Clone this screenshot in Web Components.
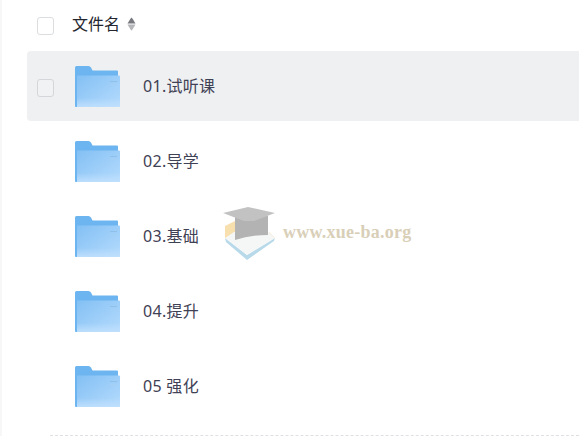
<!DOCTYPE html>
<html lang="zh">
<head>
<meta charset="utf-8">
<title>文件列表</title>
<style>
    html, body { margin: 0; padding: 0; background: #fff; overflow: hidden; }
    body { width: 579px; height: 436px; }
</style>
</head>
<body>
<file-list>
    <file-row name="01.试听课" active></file-row>
    <file-row name="02.导学"></file-row>
    <file-row name="03.基础"></file-row>
    <file-row name="04.提升"></file-row>
    <file-row name="05 强化"></file-row>
    <site-watermark slot="overlay"></site-watermark>
</file-list>

<script>
const FONT = '"Noto Sans", "Noto Sans CJK SC", sans-serif';

class CheckBox extends HTMLElement {
    connectedCallback() {
        this.attachShadow({ mode: 'open' });
        this.shadowRoot.innerHTML = `
            <style>
                :host {
                    display: block;
                    box-sizing: border-box;
                    width: 17px;
                    height: 18px;
                    background: #fff;
                    border: 1px solid #dcdde0;
                    border-radius: 3px;
                }
                :host([muted]) { background: #f1f2f4; border-color: #d5d6d9; }
            </style>
        `;
    }
}

class FolderIcon extends HTMLElement {
    connectedCallback() {
        this.attachShadow({ mode: 'open' });
        this.shadowRoot.innerHTML = `
            <style>
                :host { display: block; width: 46px; height: 42px; }
                svg { display: block; }
            </style>
            <svg width="46" height="42" viewBox="0 0 46 42">
                <defs>
                    <linearGradient id="front" x1="0" y1="0" x2="1" y2="1">
                        <stop offset="0" stop-color="#83c0f4"/>
                        <stop offset="1" stop-color="#b5dbfd"/>
                    </linearGradient>
                    <linearGradient id="band" x1="0" y1="0" x2="0" y2="1">
                        <stop offset="0" stop-color="#c0e0fd" stop-opacity="0"/>
                        <stop offset="1" stop-color="#c0e0fd" stop-opacity=".9"/>
                    </linearGradient>
                </defs>
                <path d="M0 1.500Q0 0 1.500 0H13.500Q15 0 16 1.500L17.500 4.500H42Q43 4.500 43 5.500V12H0Z" fill="#6db5f0"/>
                <path d="M2 9.500H44Q45 9.500 45 10.500V40Q45 41 44 41H2Z" fill="url(#front)"/>
                <path d="M0 8H2V41H1Q0 41 0 40Z" fill="#6db5f0"/>
                <rect x="2" y="32" width="43" height="9" fill="url(#band)"/>
                <rect x="35" y="15" width="7" height="1" fill="#8fc0ea"/>
                <rect x="35" y="18" width="7" height="1" fill="#a5cff3"/>
            </svg>
        `;
    }
}

class FileRow extends HTMLElement {
    connectedCallback() {
        this.attachShadow({ mode: 'open' });
        this.shadowRoot.innerHTML = `
            <style>
                :host { display: block; margin-left: 25px; }
                .row {
                    display: flex;
                    align-items: center;
                    height: 70px;
                    margin-bottom: 5px;
                    padding-left: 10px;
                    border-radius: 4px 0 0 4px;
                }
                :host([active]) .row { background: #eff0f2; }
                check-box { visibility: hidden; margin-top: 4px; }
                :host([active]) check-box { visibility: visible; }
                folder-icon { margin-left: 21px; margin-top: 2px; }
                .name {
                    margin-left: 22px;
                    font: 16px/20px ${FONT};
                    letter-spacing: .3px;
                    color: #3f4155;
                    white-space: nowrap;
                }
            </style>
            <div class="row">
                <check-box muted></check-box>
                <folder-icon></folder-icon>
                <span class="name"></span>
            </div>
        `;
        this.shadowRoot.querySelector('.name').textContent = this.getAttribute('name');
    }
}

class FileList extends HTMLElement {
    connectedCallback() {
        this.attachShadow({ mode: 'open' });
        this.shadowRoot.innerHTML = `
            <style>
                :host {
                    display: block;
                    position: relative;
                    box-sizing: border-box;
                    width: 579px;
                    height: 436px;
                    overflow: hidden;
                    border-left: 2px solid #f7f7f8;
                    font-family: ${FONT};
                }
                .head {
                    display: flex;
                    align-items: center;
                    height: 51px;
                    padding-left: 35px;
                }
                .title {
                    margin-left: 18px;
                    margin-top: -3px;
                    font-size: 16px;
                    line-height: 20px;
                    color: #24262f;
                }
                .sort { display: block; margin-left: 7px; margin-top: -3px; }
                .end {
                    position: absolute;
                    left: 48px;
                    right: 0;
                    bottom: 0;
                    border-top: 1px dashed #dfe0e3;
                }
            </style>
            <div class="head">
                <check-box></check-box>
                <span class="title">文件名</span>
                <svg class="sort" width="9" height="14" viewBox="0 0 9 14">
                    <path d="M4.500 .5Q5 .5 8.500 6.500H.5Q4 .5 4.500 .5Z" fill="#77797f"/>
                    <path d="M4.500 13.500Q4 13.500 .5 7.500H8.500Q5 13.500 4.500 13.500Z" fill="#b5b6ba"/>
                </svg>
            </div>
            <slot></slot>
            <div class="end"></div>
            <slot name="overlay"></slot>
        `;
    }
}

class SiteWatermark extends HTMLElement {
    connectedCallback() {
        this.attachShadow({ mode: 'open' });
        this.shadowRoot.innerHTML = `
            <style>
                :host {
                    display: flex;
                    align-items: center;
                    position: absolute;
                    left: 220px;
                    top: 204px;
                    pointer-events: none;
                }
                svg { display: block; }
                span {
                    margin-left: 7px;
                    font: bold 18px/20px "Liberation Serif", serif;
                    letter-spacing: .25px;
                    color: #d9cfb8;
                    white-space: nowrap;
                }
            </style>
            <svg width="54" height="56" viewBox="0 0 54 56">
                <path d="M3 22L13 17L20 32L10 38L3 34Z" fill="#f7dfae"/>
                <path d="M47 28L53 34L47 37Z" fill="#f6e3bb"/>
                <path d="M3 34L25 51L53 34L52 37L25 56L4 38Z" fill="#b7d9e9"/>
                <path d="M3 34L12 28L46 28L53 34L25 51Z" fill="#f5f6f6"/>
                <path d="M13 12H46V31Q28 31 13 36Z" fill="#b3b3b3"/>
                <path d="M1 9L26 3L53 9L32 17H22Z" fill="#c2c2c2"/>
            </svg>
            <span>www.xue-ba.org</span>
        `;
    }
}

customElements.define('check-box', CheckBox);
customElements.define('folder-icon', FolderIcon);
customElements.define('file-row', FileRow);
customElements.define('file-list', FileList);
customElements.define('site-watermark', SiteWatermark);
</script>
</body>
</html>
